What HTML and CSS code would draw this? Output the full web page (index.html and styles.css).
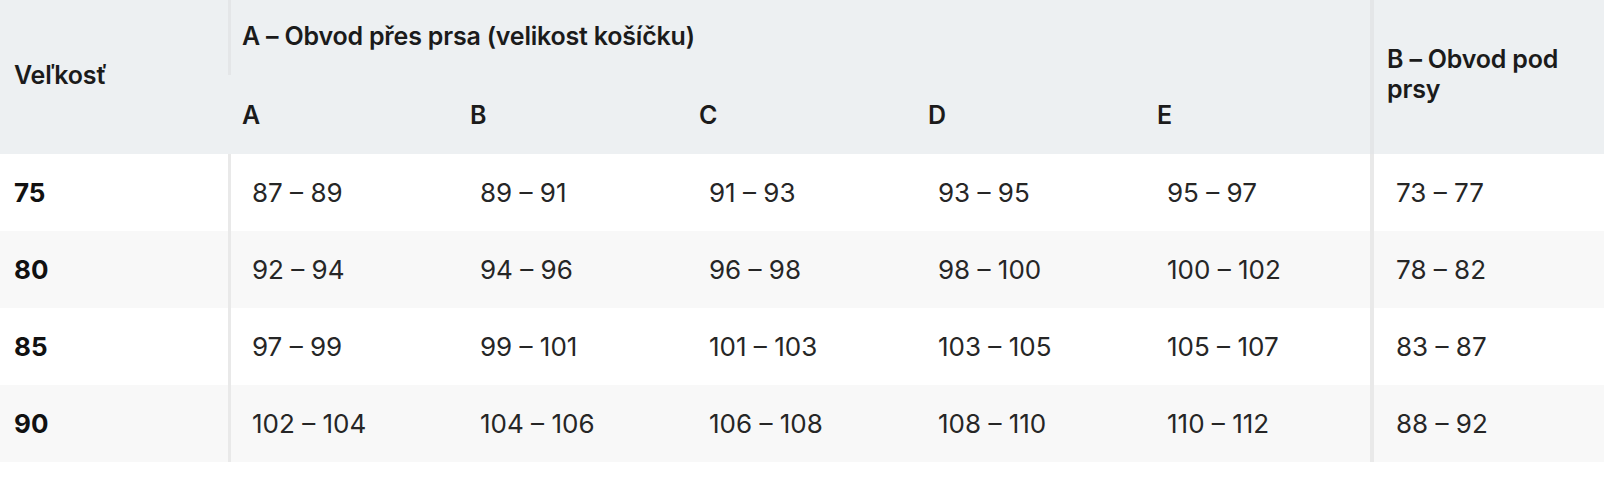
FILE: index.html
```html
<!DOCTYPE html>
<html lang="cs">
<head>
<meta charset="utf-8">
<title>Tabulka velikostí</title>
<link rel="stylesheet" href="styles.css">
</head>
<body>
<table class="sizes">
  <colgroup>
    <col class="c-size">
    <col class="c-a">
    <col class="c-mid">
    <col class="c-mid">
    <col class="c-mid">
    <col class="c-e">
    <col class="c-b">
  </colgroup>
  <thead>
    <tr class="h-top">
      <th rowspan="2" class="hc h-size">Veľkosť</th>
      <th colspan="5" class="hc h-group">A – Obvod přes prsa (velikost košíčku)</th>
      <th rowspan="2" class="hc h-under">B – Obvod pod prsy</th>
    </tr>
    <tr class="h-sub">
      <th class="hc h-first">A</th>
      <th class="hc">B</th>
      <th class="hc">C</th>
      <th class="hc">D</th>
      <th class="hc">E</th>
    </tr>
  </thead>
  <tbody>
    <tr class="row">
      <th class="r-size">75</th>
      <td class="dc d-first">87 – 89</td><td class="dc">89 – 91</td><td class="dc">91 – 93</td><td class="dc">93 – 95</td><td class="dc">95 – 97</td>
      <td class="dc d-last">73 – 77</td>
    </tr>
    <tr class="row">
      <th class="r-size">80</th>
      <td class="dc d-first">92 – 94</td><td class="dc">94 – 96</td><td class="dc">96 – 98</td><td class="dc">98 – 100</td><td class="dc">100 – 102</td>
      <td class="dc d-last">78 – 82</td>
    </tr>
    <tr class="row">
      <th class="r-size">85</th>
      <td class="dc d-first">97 – 99</td><td class="dc">99 – 101</td><td class="dc">101 – 103</td><td class="dc">103 – 105</td><td class="dc">105 – 107</td>
      <td class="dc d-last">83 – 87</td>
    </tr>
    <tr class="row">
      <th class="r-size">90</th>
      <td class="dc d-first">102 – 104</td><td class="dc">104 – 106</td><td class="dc">106 – 108</td><td class="dc">108 – 110</td><td class="dc">110 – 112</td>
      <td class="dc d-last">88 – 92</td>
    </tr>
  </tbody>
</table>
</body>
</html>
```

FILE: styles.css
```css
html, body {
  margin: 0;
  padding: 0;
  background: #ffffff;
}

body {
  font-family: Inter, "Noto Sans", sans-serif;
  color: #232323;
}

.sizes {
  width: 1604px;
  table-layout: fixed;
  border-collapse: separate;
  border-spacing: 0;
}

.c-size { width: 228px; }
.c-a { width: 232px; }
.c-mid { width: 229px; }
.c-e { width: 223px; }
.c-b { width: 234px; }

/* header cells */
.hc {
  text-align: left;
  vertical-align: middle;
  background: #edf0f2;
  font-size: 25px;
  font-weight: 600;
  letter-spacing: -0.2px;
  color: #1b1b1b;
  line-height: 30px;
  padding: 0 0 0 10px;
}

.h-top { height: 75px; }
.h-sub { height: 79px; }

.hc.h-size {
  padding-left: 14px;
  padding-bottom: 5px;
}

.hc.h-group {
  border-left: 3px solid #e4e6e8;
  padding-left: 11px;
  padding-bottom: 4px;
}

.hc.h-first {
  border-left: 3px solid #edf0f2;
  padding-left: 11px;
  background-image: linear-gradient(#ffffff, #ffffff);
  background-size: 1px 100%;
  background-repeat: no-repeat;
  background-origin: border-box;
  background-position: 1px 0;
}

.hc.h-under {
  border-left: 4px solid #e4e6e8;
  padding-left: 13px;
  padding-right: 30px;
  padding-bottom: 6px;
}

/* body rows */
.row { height: 77px; }

.row:nth-child(even) .r-size,
.row:nth-child(even) .dc {
  background: #f8f8f8;
}

.r-size {
  text-align: left;
  vertical-align: middle;
  font-size: 26px;
  font-weight: 700;
  color: #111111;
  padding: 0 0 0 14px;
}

.dc {
  text-align: left;
  vertical-align: middle;
  font-size: 26px;
  font-weight: 400;
  color: #262626;
  padding: 0 0 0 20px;
}

.dc.d-first {
  border-left: 3px solid #e9e9e9;
  padding-left: 21px;
}

.dc.d-last {
  border-left: 4px solid #e9e9e9;
  padding-left: 22px;
}
```
